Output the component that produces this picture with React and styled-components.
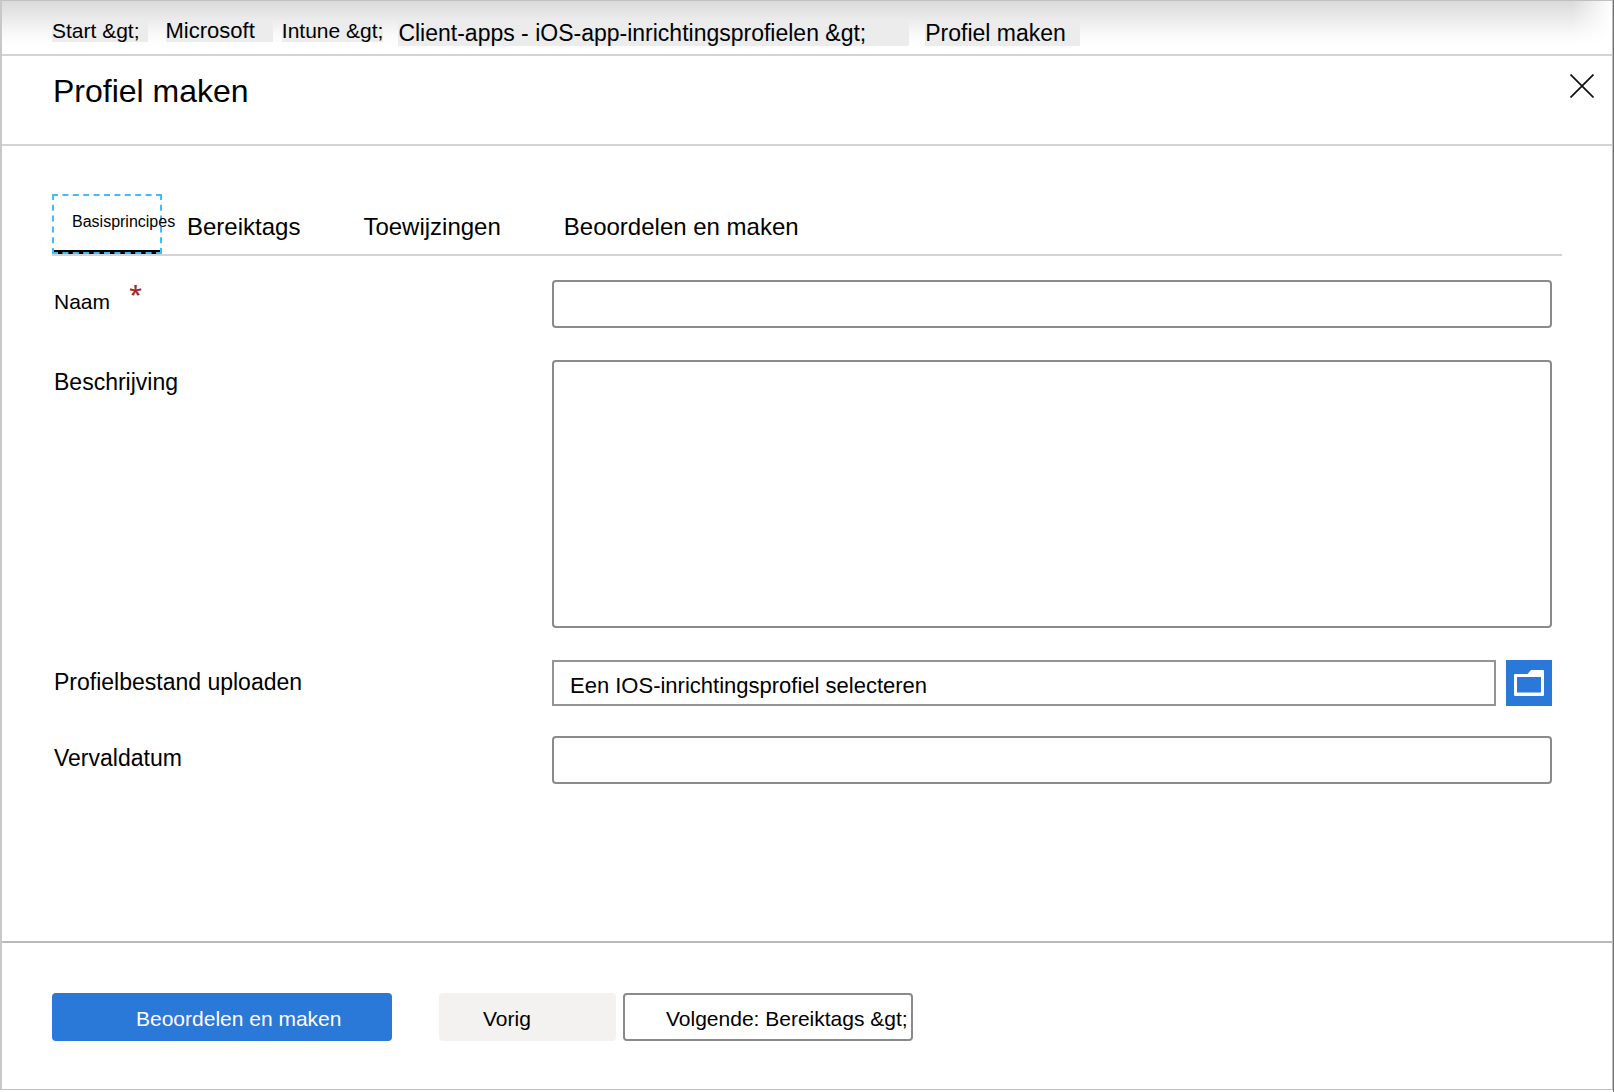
import React, { useState } from "react";
import styled, { createGlobalStyle } from "styled-components";

const GlobalStyle = createGlobalStyle`
    *{
        box-sizing: border-box;
    }
    body{
        margin: 0;
        background: #fff;
        color: #000;
        font-family: "Liberation Sans", Arial, sans-serif;
    }
    button, input, textarea{
        font-family: inherit;
        color: inherit;
    }
`

const Page = styled.div`
    min-height: 100vh;
    display: flex;
    flex-direction: column;
    padding-bottom: 2px;
    border-right: 1px solid #707070;
`

const Blade = styled.div`
    flex: 1;
    display: flex;
    flex-direction: column;
    border: 1px solid #c0c0c0;
    border-left: 2px solid #c8c8c8;
`

const Breadcrumbs = styled.nav`
    display: flex;
    align-items: flex-start;
    height: 55px;
    padding: 19px 50px 0;
    border-bottom: 2px solid #d4d4d4;
    background:
        linear-gradient(to right, rgba(255, 255, 255, 0) calc(100% - 40px), #fff),
        linear-gradient(to bottom, #dadada, #e9e9e9 16px, #fafafa 34px, #fff 46px);
`

const Crumb = styled.a`
    flex: none;
    margin-right: ${({ $gap }) => $gap}px;
    padding-right: ${({ $pad }) => $pad}px;
    background: #ececec;
    color: #000;
    font-size: ${({ $size }) => $size}px;
    line-height: ${({ $size }) => ($size > 22 ? 26 : 22)}px;
    text-decoration: none;
    white-space: nowrap;
`

const TitleBar = styled.header`
    display: flex;
    align-items: flex-start;
    justify-content: space-between;
    height: 90px;
    padding: 14px 14px 0 51px;
    border-bottom: 2px solid #d4d4d4;
    h1{
        margin: 0;
        font-size: 32px;
        font-weight: 400;
        line-height: 42px;
    }
`

const CloseButton = styled.button`
    width: 32px;
    height: 32px;
    padding: 4px;
    border: 0;
    background: none;
    cursor: pointer;
    svg{
        display: block;
    }
`

const Content = styled.main`
    flex: 1;
    padding: 48px 50px 24px;
`

const TabList = styled.div`
    display: flex;
    gap: 63px;
    border-bottom: 2px solid #d4d4d4;
`

const Tab = styled.button`
    flex: none;
    height: 60px;
    padding: 6px 0 0;
    border: 0;
    background: none;
    font-size: 24px;
    line-height: 28px;
    white-space: nowrap;
    cursor: pointer;
    &[aria-selected="true"]{
        width: 110px;
        margin-right: -38px;
        padding: 0 0 4px 18px;
        border: 2px dashed #43bdf3;
        background: linear-gradient(#000, #000) center bottom / calc(100% - 4px) 4px no-repeat border-box;
        font-size: 16px;
        text-align: left;
        outline: none;
    }
`

const Form = styled.form`
    padding: 24px 10px 0 0;
`

const Row = styled.div`
    display: grid;
    grid-template-columns: 500px minmax(0, 1fr);
    align-items: start;
    margin-bottom: ${({ $gap }) => $gap || 32}px;
`

const Label = styled.label`
    display: flex;
    align-items: flex-start;
    padding: 8px 0 0 2px;
    font-size: ${({ $small }) => ($small ? 21 : 23)}px;
    line-height: 28px;
`

const Required = styled.span`
    margin-left: 19px;
    color: #a4262c;
    font-family: "Open Sans", sans-serif;
    font-size: 24px;
    font-weight: 600;
    line-height: 12px;
`

const TextInput = styled.input`
    width: 100%;
    height: 48px;
    padding: 0 16px;
    border: 2px solid #8a8a8a;
    border-radius: 4px;
    background: #fff;
    font-size: 22px;
`

const TextArea = styled.textarea`
    display: block;
    width: 100%;
    height: 268px;
    padding: 10px 16px;
    border: 2px solid #8a8a8a;
    border-radius: 4px;
    background: #fff;
    font-size: 22px;
    resize: none;
`

const Upload = styled.div`
    display: flex;
    gap: 10px;
`

const FileInput = styled(TextInput)`
    flex: 1;
    min-width: 0;
    height: 46px;
    padding-top: 6px;
    border-color: #949494;
    border-radius: 0;
`

const BrowseButton = styled.button`
    flex: none;
    width: 46px;
    height: 46px;
    padding: 8px;
    border: 0;
    background: #2a78d7;
    cursor: pointer;
    svg{
        display: block;
    }
`

const Footer = styled.footer`
    display: flex;
    padding: 50px 50px 48px;
    border-top: 2px solid #bababa;
`

const Button = styled.button`
    flex: none;
    width: ${({ $width }) => $width}px;
    height: 48px;
    margin-right: 7px;
    padding: 4px 0 0 44px;
    border: 0;
    border-radius: 4px;
    background: #f3f2f1;
    font-size: 21px;
    line-height: 24px;
    text-align: left;
    white-space: nowrap;
    cursor: pointer;
`

const PrimaryButton = styled(Button)`
    margin-right: 47px;
    padding-left: 84px;
    background: #2a78d7;
    color: #fff;
`

const OutlineButton = styled(Button)`
    padding-left: 41px;
    border: 2px solid #8a8a8a;
    background: #fff;
`

const crumbs = [
  { text: "Start &gt;", size: 21, pad: 8, gap: 18 },
  { text: "Microsoft", size: 22, pad: 18, gap: 9 },
  { text: "Intune &gt;", size: 21, pad: 0, gap: 15 },
  { text: "Client-apps - iOS-app-inrichtingsprofielen &gt;", size: 23, pad: 43, gap: 16 },
  { text: "Profiel maken", size: 23, pad: 14, gap: 0 },
]

const tabs = ["Basisprincipes", "Bereiktags", "Toewijzingen", "Beoordelen en maken"]

const CloseIcon = () => (
  <svg width="24" height="24" viewBox="0 0 24 24" fill="none" stroke="#111" strokeWidth="1.7" aria-hidden="true">
    <path d="M0.5 0.5L23.5 23.5M23.5 0.5L0.5 23.5" />
  </svg>
)

const FolderIcon = () => (
  <svg width="30" height="30" viewBox="0 0 30 30" fill="#fff" fillRule="evenodd" aria-hidden="true">
    <path d="M1 6H13.5L17 2H29Q30 2 30 3V27Q30 28 29 28H1Q0 28 0 27V7Q0 6 1 6ZM3 9V24.5H27V9Z" />
  </svg>
)

const App = () => {
  const [selected, setSelected] = useState(0)

  return (
    <>
      <GlobalStyle />
      <Page>
        <Blade>
          <Breadcrumbs aria-label="Breadcrumb">
            {crumbs.map(({ text, size, pad, gap }) => (
              <Crumb key={text} href="#" $size={size} $pad={pad} $gap={gap}>{text}</Crumb>
            ))}
          </Breadcrumbs>
          <TitleBar>
            <h1>Profiel maken</h1>
            <CloseButton type="button" aria-label="Sluiten"><CloseIcon /></CloseButton>
          </TitleBar>
          <Content>
            <TabList role="tablist">
              {tabs.map((tab, i) => (
                <Tab key={tab} type="button" role="tab" aria-selected={i === selected} onClick={() => setSelected(i)}>{tab}</Tab>
              ))}
            </TabList>
            <Form id="profile" onSubmit={(e) => e.preventDefault()}>
              <Row>
                <Label htmlFor="name" $small>Naam<Required>*</Required></Label>
                <TextInput id="name" type="text" required />
              </Row>
              <Row>
                <Label htmlFor="description">Beschrijving</Label>
                <TextArea id="description" />
              </Row>
              <Row $gap={30}>
                <Label htmlFor="file">Profielbestand uploaden</Label>
                <Upload>
                  <FileInput id="file" type="text" readOnly value="Een IOS-inrichtingsprofiel selecteren" />
                  <BrowseButton type="button" aria-label="Bladeren"><FolderIcon /></BrowseButton>
                </Upload>
              </Row>
              <Row>
                <Label htmlFor="expiry">Vervaldatum</Label>
                <TextInput id="expiry" type="text" />
              </Row>
            </Form>
          </Content>
          <Footer>
            <PrimaryButton type="submit" form="profile" $width={340}>Beoordelen en maken</PrimaryButton>
            <Button type="button" $width={177}>Vorig</Button>
            <OutlineButton type="button" $width={290}>Volgende: Bereiktags &amp;gt;</OutlineButton>
          </Footer>
        </Blade>
      </Page>
    </>
  )
}

export default App
